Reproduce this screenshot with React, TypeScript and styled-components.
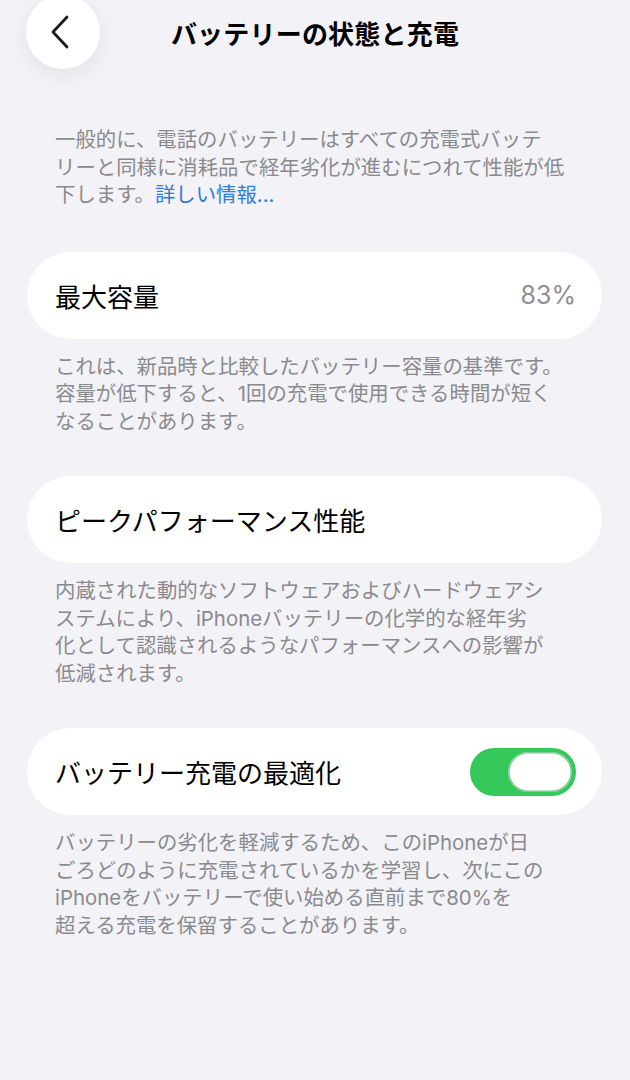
import React, { FC, useState } from "react";
import styled, { createGlobalStyle } from "styled-components";

const GlobalStyle = createGlobalStyle`
  html, body {
    margin: 0;
    padding: 0;
    background: #f2f2f7;
  }
  body {
    font-family: Inter, "Noto Sans CJK JP", sans-serif;
    -webkit-font-smoothing: antialiased;
  }
`;

const Page = styled.div`
  width: 630px;
  min-height: 1080px;
  background: #f2f2f7;
  overflow: hidden;
`;

const Header = styled.header`
  display: grid;
  grid-template-columns: 1fr auto 1fr;
  grid-template-rows: 64px;
  align-items: center;
`;

const BackButton = styled.button`
  justify-self: start;
  margin-left: 26px;
  width: 74px;
  height: 74px;
  border: none;
  border-radius: 50%;
  background: #ffffff;
  box-shadow: 0 6px 22px rgba(0, 0, 0, 0.07);
  display: flex;
  align-items: center;
  justify-content: center;
  padding: 0 6px 0 0;
  cursor: pointer;
`;

const Title = styled.h1`
  margin: 0;
  font-size: 26px;
  font-weight: 700;
  color: #000;
  letter-spacing: 0.2px;
`;

const Intro = styled.p`
  margin: 62px 0 0;
  padding: 0 20px 0 55px;
  font-size: 20.4px;
  line-height: 27.5px;
  color: #8a8a8e;
  white-space: nowrap;
`;

const Link = styled.a`
  color: #2f7cdb;
  text-decoration: none;
`;

const Sections = styled.div`
  display: flex;
  flex-direction: column;
  gap: 41px;
  margin-top: 43px;
`;

const Section = styled.section`
  display: flex;
  flex-direction: column;
`;

const Card = styled.div`
  margin: 0 28px 0 27px;
  height: 87px;
  border-radius: 44px;
  background: #ffffff;
  display: flex;
  align-items: center;
  justify-content: space-between;
  padding: 0 26px 0 28px;
`;

const Label = styled.span`
  font-size: 26px;
  color: #000;
  font-weight: 400;
`;

const Value = styled.span`
  font-size: 25px;
  color: #8e8e93;
`;

const Footer = styled.p`
  margin: 0;
  padding: 14px 20px 0 55px;
  font-size: 20.4px;
  line-height: 27.5px;
  color: #8a8a8e;
  white-space: nowrap;
`;

const Track = styled.button<{ $on: boolean }>`
  width: 106px;
  height: 48px;
  border: none;
  border-radius: 24px;
  padding: 4px;
  background: ${({ $on }) => ($on ? "#34c759" : "#e5e5ea")};
  display: flex;
  justify-content: ${({ $on }) => ($on ? "flex-end" : "flex-start")};
  align-items: center;
  cursor: pointer;
`;

const Knob = styled.span`
  width: 64px;
  height: 40px;
  border-radius: 20px;
  background: #ffffff;
  box-shadow: inset 0 0 0 1.5px rgba(40, 170, 80, 0.6);
`;

const Chevron: FC = () => (
  <svg width="22" height="34" viewBox="0 0 22 34" fill="none">
    <path
      d="M18 2 L4 17 L18 32"
      stroke="#1c1c1e"
      strokeWidth="2.8"
      strokeLinecap="round"
      strokeLinejoin="round"
    />
  </svg>
);

const Toggle: FC = () => {
  const [on, setOn] = useState(true);
  return (
    <Track $on={on} onClick={() => setOn(!on)} aria-pressed={on}>
      <Knob />
    </Track>
  );
};

export default function App() {
  return (
    <Page>
      <GlobalStyle />
      <Header>
        <BackButton aria-label="戻る">
          <Chevron />
        </BackButton>
        <Title>バッテリーの状態と充電</Title>
        <span />
      </Header>

      <Intro>
        一般的に、電話のバッテリーはすべての充電式バッテ
        <br />
        リーと同様に消耗品で経年劣化が進むにつれて性能が低
        <br />
        下します。<Link href="#">詳しい情報...</Link>
      </Intro>

      <Sections>
        <Section>
          <Card>
            <Label>最大容量</Label>
            <Value>83%</Value>
          </Card>
          <Footer>
            これは、新品時と比較したバッテリー容量の基準です。
            <br />
            容量が低下すると、1回の充電で使用できる時間が短く
            <br />
            なることがあります。
          </Footer>
        </Section>

        <Section>
          <Card>
            <Label>ピークパフォーマンス性能</Label>
          </Card>
          <Footer>
            内蔵された動的なソフトウェアおよびハードウェアシ
            <br />
            ステムにより、iPhoneバッテリーの化学的な経年劣
            <br />
            化として認識されるようなパフォーマンスへの影響が
            <br />
            低減されます。
          </Footer>
        </Section>

        <Section>
          <Card>
            <Label>バッテリー充電の最適化</Label>
            <Toggle />
          </Card>
          <Footer>
            バッテリーの劣化を軽減するため、このiPhoneが日
            <br />
            ごろどのように充電されているかを学習し、次にこの
            <br />
            iPhoneをバッテリーで使い始める直前まで80%を
            <br />
            超える充電を保留することがあります。
          </Footer>
        </Section>
      </Sections>
    </Page>
  );
}
